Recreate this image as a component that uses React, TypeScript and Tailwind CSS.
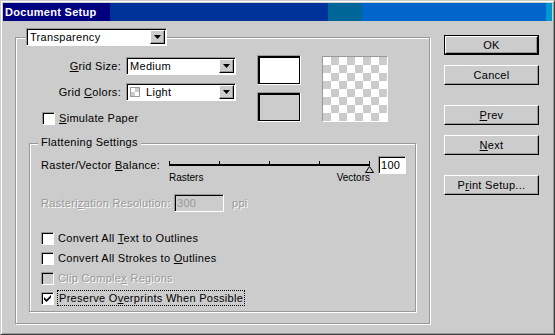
import React from "react";

const sunken =
  "border border-t-[#999999] border-l-[#999999] border-r-white border-b-white shadow-[inset_1px_1px_0_#000]";
const raised =
  "border border-t-white border-l-white border-r-black border-b-black shadow-[inset_-1px_-1px_0_#999999]";
const etched = "border border-[#999999] shadow-[inset_1px_1px_0_#fff,1px_1px_0_#fff]";
const dim = "text-[#999999] [text-shadow:1px_1px_0_#fff]";
const checker =
  "bg-[image:conic-gradient(#cccccc_25%,#ffffff_0_50%,#cccccc_0_75%,#ffffff_0)]";

function Arrow() {
  return (
    <div className={`flex h-[14px] w-[15px] shrink-0 items-center justify-center bg-[#cccccc] ${raised}`}>
      <svg width="7" height="4" viewBox="0 0 7 4">
        <path d="M0 0h7L3.5 4z" fill="#000" />
      </svg>
    </div>
  );
}

function Dropdown({ className, children }: { className: string; children: React.ReactNode }) {
  return (
    <div className={`flex h-[18px] items-center bg-white p-[1px] ${sunken} ${className}`}>
      <div className="flex flex-1 items-center gap-[6px] pl-[2px] leading-[14px]">{children}</div>
      <Arrow />
    </div>
  );
}

function Checkbox({ checked = false, disabled = false }: { checked?: boolean; disabled?: boolean }) {
  return (
    <span
      className={`flex h-[13px] w-[13px] shrink-0 items-center justify-center ${sunken} ${
        disabled ? "bg-[#cccccc]" : "bg-white"
      }`}
    >
      {checked && (
        <svg width="7" height="7" viewBox="0 0 7 7">
          <polygon points="0,2 2.5,4.5 7,0 7,2.5 2.5,7 0,4.5" fill="#000" />
        </svg>
      )}
    </span>
  );
}

function Button({ children, isDefault = false }: { children: React.ReactNode; isDefault?: boolean }) {
  return (
    <div className={`h-[20px] w-[95px] ${isDefault ? "border border-black" : ""}`}>
      <div className={`flex h-full w-full items-center justify-center bg-[#cccccc] ${raised}`}>{children}</div>
    </div>
  );
}

export default function App() {
  return (
    <div
      className={`flex h-[335px] w-[555px] flex-col border border-[#cccccc] border-r-[#404040] border-b-[#404040] bg-[#cccccc] p-[2px] text-[11px] leading-[13px] tracking-[0.3px] text-black shadow-[inset_1px_1px_0_#fff,inset_-1px_-1px_0_#999999] font-['Liberation_Sans',Arial,sans-serif]`}
    >
      {/* title bar */}
      <div className="flex h-[18px] shrink-0 items-center bg-[linear-gradient(to_right,#000080_0_107px,#003399_107px_325px,#006699_325px_359px,#0066cc_359px_543px,#0099cc_543px)] pl-[2px] font-bold text-white">
        Document Setup
      </div>

      <div className="flex items-start pl-[12px] pt-[14px]">
        {/* main group */}
        <div className={`relative mt-[2px] h-[287px] w-[415px] ${etched}`}>
          <div className="absolute left-[10px] top-[-10px]">
            <Dropdown className="w-[141px]">Transparency</Dropdown>
          </div>

          <div className="flex h-[105px] items-start pl-[25px] pt-[17px]">
            <div className="mt-[2px] flex flex-col">
              <div className="flex items-center gap-[5px]">
                <span className="w-[80px] text-right">
                  <u>G</u>rid Size:
                </span>
                <Dropdown className="w-[110px]">Medium</Dropdown>
              </div>
              <div className="mt-[8px] flex items-center gap-[5px]">
                <span className="w-[80px] text-right">
                  Grid <u>C</u>olors:
                </span>
                <Dropdown className="w-[110px]">
                  <span className={`h-[10px] w-[10px] border border-[#999999] ${checker} bg-[length:8px_8px]`} />
                  <span>Light</span>
                </Dropdown>
              </div>
              <label className="mt-[11px] flex items-center gap-[4px] pl-[1px]">
                <Checkbox />
                <span>
                  <u>S</u>imulate Paper
                </span>
              </label>
            </div>

            <div className="ml-[21px] flex flex-col gap-[7px]">
              <div className="h-[30px] w-[44px] border border-t-[#999999] border-l-[#999999] border-r-white border-b-white bg-white shadow-[inset_0_0_0_1px_#000,inset_1px_1px_0_1px_#000]" />
              <div className="h-[30px] w-[44px] border border-t-[#999999] border-l-[#999999] border-r-white border-b-white bg-[#cccccc] shadow-[inset_0_0_0_1px_#000,inset_1px_1px_0_1px_#000]" />
            </div>

            <div
              className={`ml-[21px] mt-[1px] h-[66px] w-[66px] border border-t-[#999999] border-l-[#999999] border-r-white border-b-white ${checker} bg-[length:16px_16px]`}
            />
          </div>

          {/* flattening group */}
          <div className={`relative mx-[13px] h-[169px] ${etched}`}>
            <span className="absolute left-[8px] top-[-8px] bg-[#cccccc] px-[3px]">Flattening Settings</span>

            <div className="flex flex-col pl-[11px] pt-[12px]">
              <div className="flex items-center">
                <span className="w-[128px]">
                  Raster/Vector <u>B</u>alance:
                </span>
                <svg width="206" height="18" viewBox="0 0 206 18">
                  <rect x="0" y="8" width="201" height="2" fill="#000" />
                  {[0, 50, 100, 150, 200].map((x) => (
                    <rect key={x} x={x} y="5" width="1" height="4" fill="#000" />
                  ))}
                  <polygon points="196.5,16.5 200.5,10.5 204.5,16.5" fill="#cccccc" stroke="#000" strokeWidth="1" />
                </svg>
                <div className={`ml-[3px] flex h-[18px] w-[28px] items-center bg-white pl-[2px] ${sunken}`}>100</div>
              </div>
              <div className="ml-[128px] mt-[-2px] flex w-[201px] justify-between text-[10px] leading-[12px] tracking-normal">
                <span>Rasters</span>
                <span>Vectors</span>
              </div>

              <div className="mt-[10px] flex items-center">
                <span className={`w-[133px] ${dim}`}>
                  Rasteri<u>z</u>ation Resolution:
                </span>
                <div className={`flex h-[18px] w-[50px] items-center bg-[#cccccc] pl-[2px] text-[#999999] ${sunken}`}>
                  300
                </div>
                <span className={`ml-[8px] ${dim}`}>ppi</span>
              </div>

              <div className="mt-[16px] flex flex-col">
                <label className="flex h-[20px] items-center gap-[4px]">
                  <Checkbox />
                  <span>
                    Convert All <u>T</u>ext to Outlines
                  </span>
                </label>
                <label className="flex h-[20px] items-center gap-[4px]">
                  <Checkbox />
                  <span>
                    Convert All Strokes to <u>O</u>utlines
                  </span>
                </label>
                <label className="flex h-[20px] items-center gap-[4px]">
                  <Checkbox disabled />
                  <span className={dim}>
                    Clip Comple<u>x</u> Regions
                  </span>
                </label>
                <label className="flex h-[20px] items-center gap-[3px]">
                  <Checkbox checked />
                  <span className="border border-dotted border-black px-[1px] leading-[14px]">
                    Preserve O<u>v</u>erprints When Possible
                  </span>
                </label>
              </div>
            </div>
          </div>
        </div>

        {/* buttons */}
        <div className="ml-[14px] flex flex-col">
          <Button isDefault>OK</Button>
          <div className="mt-[10px]">
            <Button>Cancel</Button>
          </div>
          <div className="mt-[20px]">
            <Button>
              <span>
                <u>P</u>rev
              </span>
            </Button>
          </div>
          <div className="mt-[10px]">
            <Button>
              <span>
                <u>N</u>ext
              </span>
            </Button>
          </div>
          <div className="mt-[20px]">
            <Button>
              <span>
                P<u>r</u>int Setup...
              </span>
            </Button>
          </div>
        </div>
      </div>
    </div>
  );
}
